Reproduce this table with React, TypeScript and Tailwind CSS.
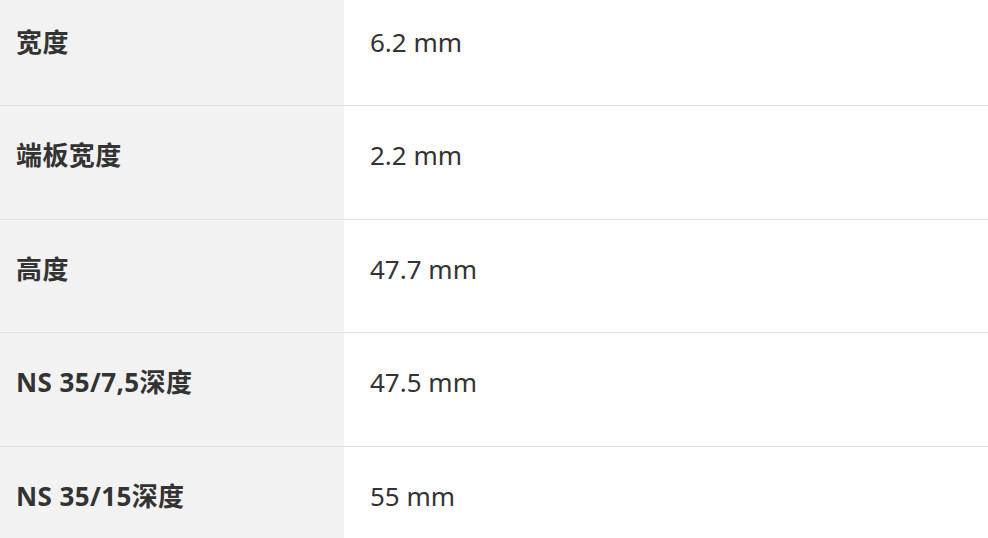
const rows = [
  { label: "宽度", value: "6.2 mm" },
  { label: "端板宽度", value: "2.2 mm" },
  { label: "高度", value: "47.7 mm" },
  { label: "NS 35/7,5深度", value: "47.5 mm" },
  { label: "NS 35/15深度", value: "55 mm" },
];

export default function App() {
  return (
    <div className="w-[988px] h-[538px] overflow-hidden bg-white font-['Noto_Sans','Noto_Sans_CJK_SC',sans-serif] text-[#333333]">
      <div className="-mt-[7px]">
        {rows.map((row, i) => (
          <div key={i} className="grid grid-cols-[344px_1fr] h-[113.4px] border-b border-[#e0e0e0]">
            <div className="bg-[#f2f2f2] pl-4 pt-[30px] text-[26px] leading-[39px] font-bold tracking-[0.4px]">{row.label}</div>
            <div className="pl-[26px] pt-[30px] text-[26px] leading-[39px]">{row.value}</div>
          </div>
        ))}
      </div>
    </div>
  );
}
